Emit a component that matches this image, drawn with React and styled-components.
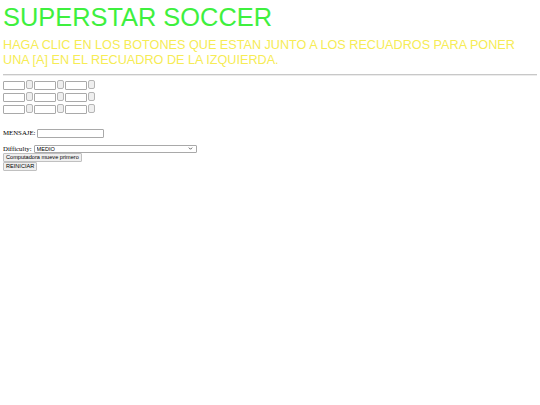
import React from 'react'
import styled, { createGlobalStyle } from 'styled-components'

const Global = createGlobalStyle`
  html, body {
    margin: 0;
    background: #ffffff;
  }
  body {
    padding: 0 3px;
    font-family: "Liberation Serif", "Times New Roman", serif;
    font-size: 6.8px;
    color: #000;
  }
`

const cells = [0, 1, 2, 3, 4, 5, 6, 7, 8]

const chevron =
  "data:image/svg+xml;utf8,<svg xmlns='http://www.w3.org/2000/svg' width='6' height='4' viewBox='0 0 6 4'><path d='M0.8 0.8 L3 3 L5.2 0.8' fill='none' stroke='%23333' stroke-width='1'/></svg>"

export default function App() {
  return (
    <Page>
      <Global />
      <Title>SUPERSTAR SOCCER</Title>
      <Intro>
        HAGA CLIC EN LOS BOTONES QUE ESTAN JUNTO A LOS RECUADROS PARA PONER UNA [A] EN EL RECUADRO DE LA IZQUIERDA.
      </Intro>
      <Rule />
      <Board>
        {cells.map((i) => (
          <Cell key={i}>
            <CellInput type="text" />
            <CellButton type="button" />
          </Cell>
        ))}
      </Board>
      <Field>
        <label>MENSAJE:</label>
        <MessageInput type="text" />
      </Field>
      <Controls>
        <Row>
          <label>Difficulty:</label>
          <Select defaultValue="MEDIO">
            <option>FACIL</option>
            <option>MEDIO</option>
            <option>DIFICIL</option>
          </Select>
        </Row>
        <Button type="button">Computadora mueve primero</Button>
        <Button type="button">REINICIAR</Button>
      </Controls>
    </Page>
  )
}

// ------- STYLES -------
const Page = styled.div`
  width: 534px;
`

const Title = styled.h1`
  margin: 0;
  padding-top: 2px;
  font-family: "Liberation Sans", Arial, sans-serif;
  font-weight: normal;
  font-size: 25.4px;
  line-height: 30px;
  color: #3ef03e;
`

const Intro = styled.p`
  margin: 6px 0 0;
  font-family: "Liberation Sans", Arial, sans-serif;
  font-size: 12.65px;
  line-height: 15px;
  color: #f6ec55;
`

const Rule = styled.hr`
  margin: 6px 0 4px;
  border: none;
  border-top: 1px solid #c8c8c8;
  border-bottom: 1px solid #ececec;
`

const Board = styled.div`
  display: grid;
  grid-template-columns: repeat(3, 31px);
  row-gap: 2px;
  width: 93px;
`

const Cell = styled.div`
  display: flex;
  align-items: flex-start;
  gap: 1px;
`

const CellInput = styled.input`
  box-sizing: border-box;
  width: 22px;
  height: 9px;
  margin: 1px 0 0;
  padding: 0;
  border: 1px solid #a9a9a9;
  border-radius: 1px;
  background: #fff;
`

const CellButton = styled.button`
  box-sizing: border-box;
  width: 7px;
  height: 9px;
  margin: 0;
  padding: 0;
  border: 1px solid #b5b5b5;
  border-radius: 2px;
  background: #efefef;
`

const Field = styled.div`
  display: flex;
  align-items: center;
  gap: 2px;
  margin-top: 14px;
  line-height: 10px;
`

const MessageInput = styled.input`
  box-sizing: border-box;
  width: 67px;
  height: 9px;
  margin: 0;
  padding: 0;
  border: 1px solid #a9a9a9;
  border-radius: 1px;
`

const Controls = styled.div`
  display: flex;
  flex-direction: column;
  align-items: flex-start;
  gap: 0;
  margin-top: 6px;
`

const Row = styled.div`
  display: flex;
  align-items: center;
  gap: 2px;
  line-height: 9px;
`

const Select = styled.select`
  box-sizing: border-box;
  appearance: none;
  width: 163px;
  height: 8px;
  margin: 0;
  padding: 0 0 0 2px;
  font-family: "Liberation Sans", Arial, sans-serif;
  font-size: 5.6px;
  line-height: 6px;
  color: #000;
  border: 1px solid #a9a9a9;
  border-radius: 1px;
  background: #fff url("${chevron}") no-repeat right 3px center;
  background-size: 5px 3px;
`

const Button = styled.button`
  box-sizing: border-box;
  height: 9px;
  margin: 0;
  padding: 0 2px;
  font-family: "Liberation Sans", Arial, sans-serif;
  font-size: 5.6px;
  line-height: 7px;
  color: #000;
  border: 1px solid #c0c0c0;
  border-radius: 1px;
  background: #efefef;
`
